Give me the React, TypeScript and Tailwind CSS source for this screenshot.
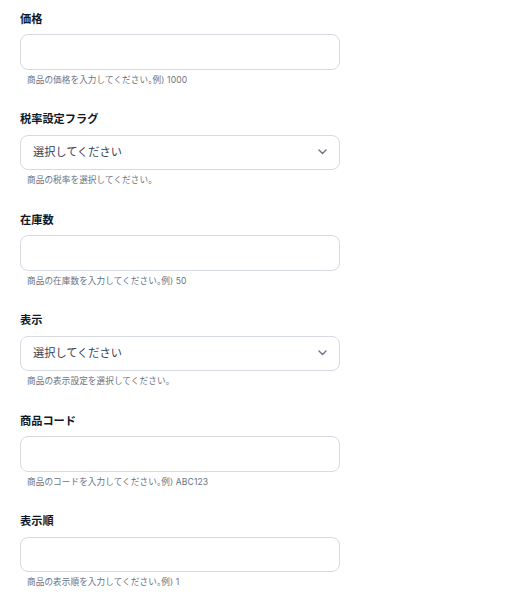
import React from 'react'

type Field = {
  label: string
  kind: 'input' | 'select'
  help: string
}

const fields: Field[] = [
  { label: '価格', kind: 'input', help: '商品の価格を入力してください。例) 1000' },
  { label: '税率設定フラグ', kind: 'select', help: '商品の税率を選択してください。' },
  { label: '在庫数', kind: 'input', help: '商品の在庫数を入力してください。例) 50' },
  { label: '表示', kind: 'select', help: '商品の表示設定を選択してください。' },
  { label: '商品コード', kind: 'input', help: '商品のコードを入力してください。例) ABC123' },
  { label: '表示順', kind: 'input', help: '商品の表示順を入力してください。例) 1' },
]

function Chevron() {
  return (
    <svg width="9" height="6" viewBox="0 0 9 6" fill="none" className="text-gray-500">
      <path d="M1 1l3.5 3.5L8 1" stroke="currentColor" strokeWidth="1.4" strokeLinecap="round" strokeLinejoin="round" />
    </svg>
  )
}

// the 。 is set proportional (palt) so it sits tight like the reference
function HelpText({ text }: { text: string }) {
  const parts = text.split('。')
  return (
    <p className="mt-1 pl-[7px] text-[8.6px] leading-3 tracking-[0.1px] text-gray-500">
      {parts.map((p, i) => (
        <React.Fragment key={i}>
          {p}
          {i < parts.length - 1 && <span className="[font-feature-settings:'palt']">。</span>}
        </React.Fragment>
      ))}
    </p>
  )
}

export default function App() {
  return (
    <div
      className="min-h-[600px] w-full bg-white px-5 pt-[10.5px]"
      style={{ fontFamily: 'Inter, "Noto Sans CJK JP", sans-serif' }}
    >
      <div className="flex w-[320px] flex-col gap-[25.5px]">
        {fields.map((f) => (
          <div key={f.label} className="flex flex-col">
            {/* Label */}
            <label className="text-[11.2px] font-semibold leading-4 text-gray-900">{f.label}</label>

            {/* Control */}
            {f.kind === 'input' ? (
              <input
                type="text"
                className="mt-[7.5px] h-[35.5px] w-full rounded-lg border border-[#d5d9e0] bg-white px-3 text-[11.2px] text-gray-700 outline-none"
              />
            ) : (
              <div className="mt-[7.5px] flex h-[35.5px] w-full items-center justify-between rounded-lg border border-[#d5d9e0] bg-white pl-3 pr-[12px]">
                <span className="text-[11.2px] text-gray-700">選択してください</span>
                <Chevron />
              </div>
            )}

            {/* Help text */}
            <HelpText text={f.help} />
          </div>
        ))}
      </div>
    </div>
  )
}
